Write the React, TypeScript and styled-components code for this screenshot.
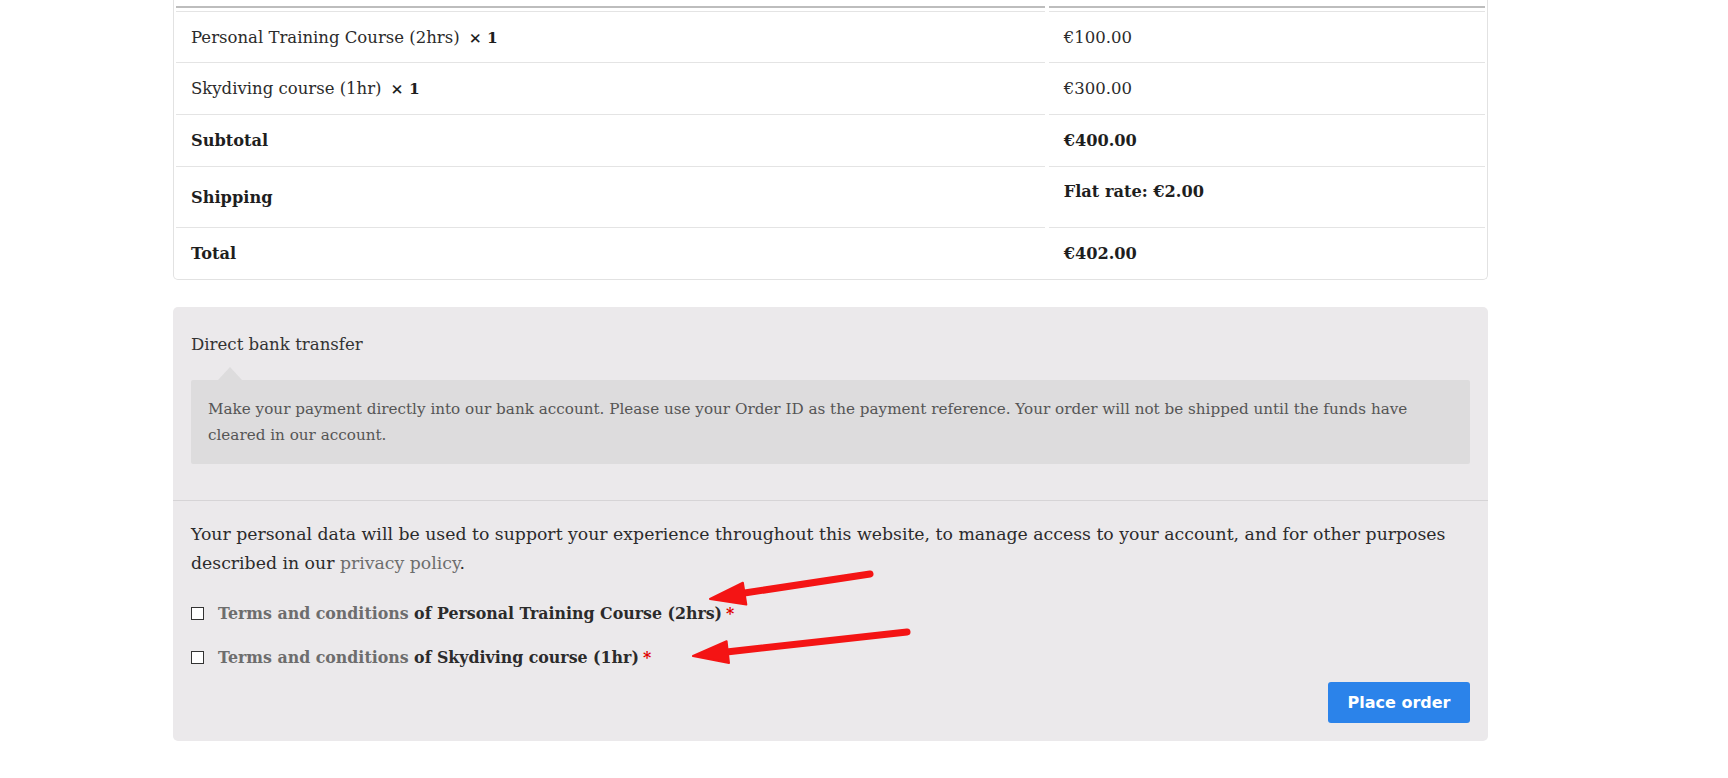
import React from "react";
import styled, { createGlobalStyle } from "styled-components";

const GlobalStyle = createGlobalStyle`
  html, body {
    margin: 0;
    padding: 0;
    background: #ffffff;
  }
  body {
    font-family: "DejaVu Serif", "Liberation Serif", serif;
    color: #2b2b2b;
  }
`;

const Page = styled.div`
  position: relative;
  width: 1728px;
  height: 778px;
  overflow: hidden;
  background: #fff;
`;

const Content = styled.div`
  width: 1315px;
  margin-left: 173px;
  display: flex;
  flex-direction: column;
  gap: 27px;
`;

const OrderTable = styled.div`
  display: grid;
  grid-template-columns: 868fr 436fr;
  column-gap: 4px;
  padding: 0 2px;
  border: 1px solid #e2e2e2;
  border-top: none;
  border-radius: 0 0 5px 5px;
`;

const HeadCell = styled.div`
  height: 6px;
  border-bottom: 2px solid #bdbdbd;
  margin-bottom: 3px;
`;

const Cell = styled.div<{ $h: number; $bold?: boolean; $top?: boolean }>`
  height: ${(p) => p.$h}px;
  box-sizing: border-box;
  border-top: 1px solid #e4e4e4;
  display: flex;
  align-items: ${(p) => (p.$top ? "flex-start" : "center")};
  padding: ${(p) => (p.$top ? "12px 15px 0" : "1px 15px 0")};
  font-size: ${(p) => (p.$bold ? "16.2px" : "16.5px")};
  line-height: 26px;
  font-weight: ${(p) => (p.$bold ? 700 : 400)};
  color: ${(p) => (p.$bold ? "#1e1e1e" : "#2b2b2b")};
  white-space: nowrap;
`;

const Qty = styled.strong`
  margin-left: 9px;
  font-weight: 700;
  font-size: 15.5px;
  color: #1e1e1e;
`;

const Payment = styled.div`
  background: #ebe9eb;
  border-radius: 5px;
  display: flex;
  flex-direction: column;
`;

const MethodSection = styled.div`
  padding: 23px 18px 36px;
  border-bottom: 1px solid #d6d4d6;
  display: flex;
  flex-direction: column;
  gap: 21px;
`;

const MethodLabel = styled.div`
  font-size: 16.6px;
  line-height: 29px;
  color: #333;
`;

const Notice = styled.div`
  position: relative;
  background: #dddcdd;
  border-radius: 2px;
  padding: 16px 17px;
  font-size: 15.2px;
  line-height: 26px;
  color: #555;

  &::before {
    content: "";
    position: absolute;
    top: -13px;
    left: 27px;
    border-left: 12px solid transparent;
    border-right: 12px solid transparent;
    border-bottom: 13px solid #dddcdd;
  }
`;

const PlaceOrderSection = styled.div`
  padding: 19px 18px 18px;
  display: flex;
  flex-direction: column;
`;

const Privacy = styled.p`
  margin: 0 0 21px;
  font-size: 17.3px;
  line-height: 29px;
  color: #2b2b2b;
`;

const Link = styled.a`
  color: #6d6d6d;
  text-decoration: none;
`;

const TermsList = styled.div`
  display: flex;
  flex-direction: column;
  gap: 15px;
`;

const TermsRow = styled.label`
  display: flex;
  align-items: center;
  gap: 14px;
  font-size: 15.8px;
  line-height: 29px;
  font-weight: 700;
  color: #2b2b2b;
`;

const CheckBox = styled.span`
  width: 11px;
  height: 11px;
  border: 1px solid #333;
  background: #fff;
  flex: none;
`;

const TermsLink = styled.span`
  color: #6d6d6d;
`;

const Required = styled.span`
  color: #e00000;
  margin-left: 4px;
`;

const ButtonRow = styled.div`
  display: flex;
  justify-content: flex-end;
  margin-top: 10px;
`;

const PlaceOrderButton = styled.button`
  width: 142px;
  height: 41px;
  border: none;
  border-radius: 3px;
  background: #2b83ea;
  color: #fff;
  font-family: "DejaVu Sans", "Verdana", sans-serif;
  font-weight: 700;
  font-size: 16px;
  cursor: pointer;
`;

const Overlay = styled.svg`
  position: absolute;
  left: 0;
  top: 0;
  pointer-events: none;
`;

const rows = [
  { label: "Personal Training Course (2hrs)", qty: true, value: "€100.00", h: 51, bold: false },
  { label: "Skydiving course (1hr)", qty: true, value: "€300.00", h: 52, bold: false },
  { label: "Subtotal", qty: false, value: "€400.00", h: 52, bold: true },
];

export default function App() {
  return (
    <Page>
      <GlobalStyle />
      <Content>
        <OrderTable>
          <HeadCell />
          <HeadCell />
          {rows.map((r) => (
            <React.Fragment key={r.label}>
              <Cell $h={r.h} $bold={r.bold}>
                {r.label}
                {r.qty && <Qty>× 1</Qty>}
              </Cell>
              <Cell $h={r.h} $bold={r.bold}>
                {r.value}
              </Cell>
            </React.Fragment>
          ))}
          <Cell $h={61} $bold>
            Shipping
          </Cell>
          <Cell $h={61} $bold $top>
            Flat rate: €2.00
          </Cell>
          <Cell $h={52} $bold>
            Total
          </Cell>
          <Cell $h={52} $bold>
            €402.00
          </Cell>
        </OrderTable>

        <Payment>
          <MethodSection>
            <MethodLabel>Direct bank transfer</MethodLabel>
            <Notice>
              Make your payment directly into our bank account. Please use your Order ID as the payment
              reference. Your order will not be shipped until the funds have cleared in our account.
            </Notice>
          </MethodSection>
          <PlaceOrderSection>
            <Privacy>
              Your personal data will be used to support your experience throughout this website, to manage
              access to your account, and for other purposes described in our{" "}
              <Link href="#">privacy policy</Link>.
            </Privacy>
            <TermsList>
              <TermsRow>
                <CheckBox />
                <span>
                  <TermsLink>Terms and conditions</TermsLink> of Personal Training Course (2hrs)
                  <Required>*</Required>
                </span>
              </TermsRow>
              <TermsRow>
                <CheckBox />
                <span>
                  <TermsLink>Terms and conditions</TermsLink> of Skydiving course (1hr)
                  <Required>*</Required>
                </span>
              </TermsRow>
            </TermsList>
            <ButtonRow>
              <PlaceOrderButton>Place order</PlaceOrderButton>
            </ButtonRow>
          </PlaceOrderSection>
        </Payment>
      </Content>

      <Overlay width={1728} height={778} viewBox="0 0 1728 778">
        <g fill="#f41414" stroke="#f41414" strokeLinecap="round" strokeLinejoin="round">
          <line x1={870} y1={574} x2={738} y2={594} strokeWidth={7} />
          <polygon points="710,599 746.3,604.5 742.9,582.7" strokeWidth={2} />
          <line x1={907} y1={632} x2={722} y2={652.5} strokeWidth={7} />
          <polygon points="693,656 729,663 726.6,641.2" strokeWidth={2} />
        </g>
      </Overlay>
    </Page>
  );
}
